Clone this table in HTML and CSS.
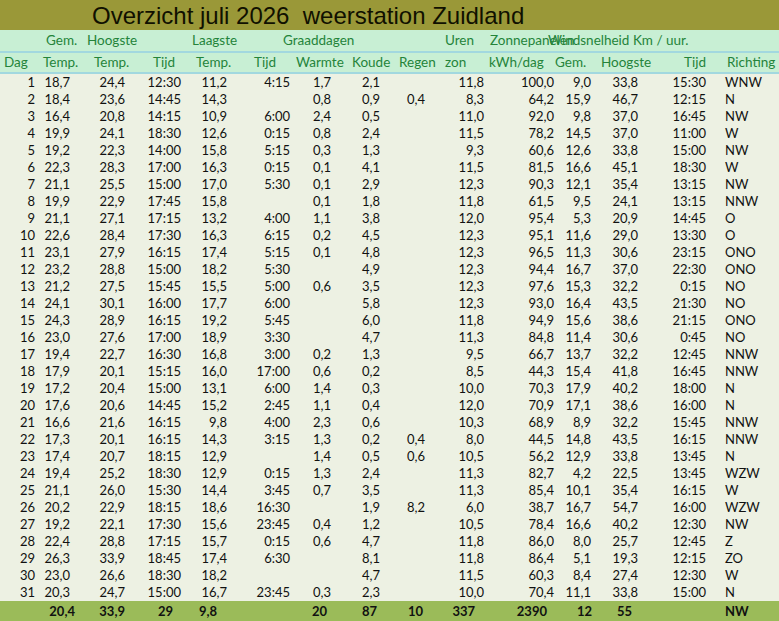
FILE: index.html
```html
<!DOCTYPE html>
<html lang="nl">
<head>
<meta charset="utf-8">
<title>Overzicht juli 2026 weerstation Zuidland</title>
<link rel="stylesheet" href="styles.css">
</head>
<body>
<div class="sheet">
  <div class="title">Overzicht juli 2026&nbsp; weerstation Zuidland</div>
  <div class="head1">
    <span>Gem.</span><span>Hoogste</span><span>Laagste</span><span>Graaddagen</span><span>Uren</span><span>Zonnepanelen</span><span>Windsnelheid Km / uur.</span>
  </div>
  <div class="head2">
    <span>Dag</span><span>Temp.</span><span>Temp.</span><span>Tijd</span><span>Temp.</span><span>Tijd</span><span>Warmte</span><span>Koude</span><span>Regen</span><span>zon</span><span>kWh/dag</span><span>Gem.</span><span>Hoogste</span><span class="r">Tijd</span><span class="rich">Richting</span>
  </div>
  <div class="data">
    <div class="row"><span>1</span><span>18,7</span><span>24,4</span><span>12:30</span><span>11,2</span><span>4:15</span><span>1,7</span><span>2,1</span><span></span><span>11,8</span><span>100,0</span><span>9,0</span><span>33,8</span><span>15:30</span><span>WNW</span></div>
    <div class="row"><span>2</span><span>18,4</span><span>23,6</span><span>14:45</span><span>14,3</span><span></span><span>0,8</span><span>0,9</span><span>0,4</span><span>8,3</span><span>64,2</span><span>15,9</span><span>46,7</span><span>12:15</span><span>N</span></div>
    <div class="row"><span>3</span><span>16,4</span><span>20,8</span><span>14:15</span><span>10,9</span><span>6:00</span><span>2,4</span><span>0,5</span><span></span><span>11,0</span><span>92,0</span><span>9,8</span><span>37,0</span><span>16:45</span><span>NW</span></div>
    <div class="row"><span>4</span><span>19,9</span><span>24,1</span><span>18:30</span><span>12,6</span><span>0:15</span><span>0,8</span><span>2,4</span><span></span><span>11,5</span><span>78,2</span><span>14,5</span><span>37,0</span><span>11:00</span><span>W</span></div>
    <div class="row"><span>5</span><span>19,2</span><span>22,3</span><span>14:00</span><span>15,8</span><span>5:15</span><span>0,3</span><span>1,3</span><span></span><span>9,3</span><span>60,6</span><span>12,6</span><span>33,8</span><span>15:00</span><span>NW</span></div>
    <div class="row"><span>6</span><span>22,3</span><span>28,3</span><span>17:00</span><span>16,3</span><span>0:15</span><span>0,1</span><span>4,1</span><span></span><span>11,5</span><span>81,5</span><span>16,6</span><span>45,1</span><span>18:30</span><span>W</span></div>
    <div class="row"><span>7</span><span>21,1</span><span>25,5</span><span>15:00</span><span>17,0</span><span>5:30</span><span>0,1</span><span>2,9</span><span></span><span>12,3</span><span>90,3</span><span>12,1</span><span>35,4</span><span>13:15</span><span>NW</span></div>
    <div class="row"><span>8</span><span>19,9</span><span>22,9</span><span>17:45</span><span>15,8</span><span></span><span>0,1</span><span>1,8</span><span></span><span>11,8</span><span>61,5</span><span>9,5</span><span>24,1</span><span>13:15</span><span>NNW</span></div>
    <div class="row"><span>9</span><span>21,1</span><span>27,1</span><span>17:15</span><span>13,2</span><span>4:00</span><span>1,1</span><span>3,8</span><span></span><span>12,0</span><span>95,4</span><span>5,3</span><span>20,9</span><span>14:45</span><span>O</span></div>
    <div class="row"><span>10</span><span>22,6</span><span>28,4</span><span>17:30</span><span>16,3</span><span>6:15</span><span>0,2</span><span>4,5</span><span></span><span>12,3</span><span>95,1</span><span>11,6</span><span>29,0</span><span>13:30</span><span>O</span></div>
    <div class="row"><span>11</span><span>23,1</span><span>27,9</span><span>16:15</span><span>17,4</span><span>5:15</span><span>0,1</span><span>4,8</span><span></span><span>12,3</span><span>96,5</span><span>11,3</span><span>30,6</span><span>23:15</span><span>ONO</span></div>
    <div class="row"><span>12</span><span>23,2</span><span>28,8</span><span>15:00</span><span>18,2</span><span>5:30</span><span></span><span>4,9</span><span></span><span>12,3</span><span>94,4</span><span>16,7</span><span>37,0</span><span>22:30</span><span>ONO</span></div>
    <div class="row"><span>13</span><span>21,2</span><span>27,5</span><span>15:45</span><span>15,5</span><span>5:00</span><span>0,6</span><span>3,5</span><span></span><span>12,3</span><span>97,6</span><span>15,3</span><span>32,2</span><span>0:15</span><span>NO</span></div>
    <div class="row"><span>14</span><span>24,1</span><span>30,1</span><span>16:00</span><span>17,7</span><span>6:00</span><span></span><span>5,8</span><span></span><span>12,3</span><span>93,0</span><span>16,4</span><span>43,5</span><span>21:30</span><span>NO</span></div>
    <div class="row"><span>15</span><span>24,3</span><span>28,9</span><span>16:15</span><span>19,2</span><span>5:45</span><span></span><span>6,0</span><span></span><span>11,8</span><span>94,9</span><span>15,6</span><span>38,6</span><span>21:15</span><span>ONO</span></div>
    <div class="row"><span>16</span><span>23,0</span><span>27,6</span><span>17:00</span><span>18,9</span><span>3:30</span><span></span><span>4,7</span><span></span><span>11,3</span><span>84,8</span><span>11,4</span><span>30,6</span><span>0:45</span><span>NO</span></div>
    <div class="row"><span>17</span><span>19,4</span><span>22,7</span><span>16:30</span><span>16,8</span><span>3:00</span><span>0,2</span><span>1,3</span><span></span><span>9,5</span><span>66,7</span><span>13,7</span><span>32,2</span><span>12:45</span><span>NNW</span></div>
    <div class="row"><span>18</span><span>17,9</span><span>20,1</span><span>15:15</span><span>16,0</span><span>17:00</span><span>0,6</span><span>0,2</span><span></span><span>8,5</span><span>44,3</span><span>15,4</span><span>41,8</span><span>16:45</span><span>NNW</span></div>
    <div class="row"><span>19</span><span>17,2</span><span>20,4</span><span>15:00</span><span>13,1</span><span>6:00</span><span>1,4</span><span>0,3</span><span></span><span>10,0</span><span>70,3</span><span>17,9</span><span>40,2</span><span>18:00</span><span>N</span></div>
    <div class="row"><span>20</span><span>17,6</span><span>20,6</span><span>14:45</span><span>15,2</span><span>2:45</span><span>1,1</span><span>0,4</span><span></span><span>12,0</span><span>70,9</span><span>17,1</span><span>38,6</span><span>16:00</span><span>N</span></div>
    <div class="row"><span>21</span><span>16,6</span><span>21,6</span><span>16:15</span><span>9,8</span><span>4:00</span><span>2,3</span><span>0,6</span><span></span><span>10,3</span><span>68,9</span><span>8,9</span><span>32,2</span><span>15:45</span><span>NNW</span></div>
    <div class="row"><span>22</span><span>17,3</span><span>20,1</span><span>16:15</span><span>14,3</span><span>3:15</span><span>1,3</span><span>0,2</span><span>0,4</span><span>8,0</span><span>44,5</span><span>14,8</span><span>43,5</span><span>16:15</span><span>NNW</span></div>
    <div class="row"><span>23</span><span>17,4</span><span>20,7</span><span>18:15</span><span>12,9</span><span></span><span>1,4</span><span>0,5</span><span>0,6</span><span>10,5</span><span>56,2</span><span>12,9</span><span>33,8</span><span>13:45</span><span>N</span></div>
    <div class="row"><span>24</span><span>19,4</span><span>25,2</span><span>18:30</span><span>12,9</span><span>0:15</span><span>1,3</span><span>2,4</span><span></span><span>11,3</span><span>82,7</span><span>4,2</span><span>22,5</span><span>13:45</span><span>WZW</span></div>
    <div class="row"><span>25</span><span>21,1</span><span>26,0</span><span>15:30</span><span>14,4</span><span>3:45</span><span>0,7</span><span>3,5</span><span></span><span>11,3</span><span>85,4</span><span>10,1</span><span>35,4</span><span>16:15</span><span>W</span></div>
    <div class="row"><span>26</span><span>20,2</span><span>22,9</span><span>18:15</span><span>18,6</span><span>16:30</span><span></span><span>1,9</span><span>8,2</span><span>6,0</span><span>38,7</span><span>16,7</span><span>54,7</span><span>16:00</span><span>WZW</span></div>
    <div class="row"><span>27</span><span>19,2</span><span>22,1</span><span>17:30</span><span>15,6</span><span>23:45</span><span>0,4</span><span>1,2</span><span></span><span>10,5</span><span>78,4</span><span>16,6</span><span>40,2</span><span>12:30</span><span>NW</span></div>
    <div class="row"><span>28</span><span>22,4</span><span>28,8</span><span>17:15</span><span>15,7</span><span>0:15</span><span>0,6</span><span>4,7</span><span></span><span>11,8</span><span>86,0</span><span>8,0</span><span>25,7</span><span>12:45</span><span>Z</span></div>
    <div class="row"><span>29</span><span>26,3</span><span>33,9</span><span>18:45</span><span>17,4</span><span>6:30</span><span></span><span>8,1</span><span></span><span>11,8</span><span>86,4</span><span>5,1</span><span>19,3</span><span>12:15</span><span>ZO</span></div>
    <div class="row"><span>30</span><span>23,0</span><span>26,6</span><span>18:30</span><span>18,2</span><span></span><span></span><span>4,7</span><span></span><span>11,5</span><span>60,3</span><span>8,4</span><span>27,4</span><span>12:30</span><span>W</span></div>
    <div class="row"><span>31</span><span>20,3</span><span>24,7</span><span>15:00</span><span>16,7</span><span>23:45</span><span>0,3</span><span>2,3</span><span></span><span>10,0</span><span>70,4</span><span>11,1</span><span>33,8</span><span>15:00</span><span>N</span></div>
  </div>
  <div class="foot">
    <span></span><span>20,4</span><span>33,9</span><span>29</span><span>9,8</span><span></span><span>20</span><span>87</span><span>10</span><span>337</span><span>2390</span><span>12</span><span>55</span><span></span><span>NW</span>
  </div>
</div>
</body>
</html>
```

FILE: styles.css
```css
html, body {
  margin: 0;
  padding: 0;
  background: #edf1e3;
}
.sheet {
  width: 779px;
  height: 621px;
  overflow: hidden;
  background: #edf1e3;
  font-family: Lato, "Open Sans", sans-serif;
  font-size: 13px;
  color: #111111;
}
.title {
  height: 30px;
  background: #9a9838;
  font-family: "Liberation Sans", Arial, sans-serif;
  font-size: 24px;
  line-height: 31px;
  padding-left: 92px;
  color: #101000;
  white-space: pre;
}
.head1, .head2 {
  display: grid;
  background: #c8efd4;
  color: #24843a;
  white-space: nowrap;
  border-bottom: 2px solid #a2d8df;
  font-size: 13.5px;
}
.head1 {
  height: 21px;
  line-height: 21px;
  padding-left: 46px;
  grid-template-columns: 41px 105px 91px 162px 45px 58px 1fr;
}
.head2 {
  height: 19px;
  line-height: 19px;
  padding-left: 4px;
  grid-template-columns: 39px 51px 59px 43px 58px 42px 56px 47px 46px 44px 66px 46px 65px 40px 1fr;
}
.head2 .r {
  text-align: right;
}
.head2 .rich {
  padding-left: 21px;
}
.row, .foot {
  display: grid;
  height: 17px;
  line-height: 17px;
  white-space: nowrap;
}
.row {
  grid-template-columns: 38px 35px 55px 56px 46px 63px 41px 49px 45px 59px 70px 37px 47px 68px 1fr;
}
.row span {
  text-align: right;
  padding-right: 3px;
}
.row span:last-child {
  text-align: left;
  padding-left: 16px;
  padding-right: 0;
}
.foot {
  height: 21px;
  line-height: 21px;
  background: #9bbb59;
  font-weight: bold;
  grid-template-columns: 38px 37px 50px 48px 44px 76px 34px 50px 46px 52px 72px 45px 40px 93px 1fr;
}
.foot span {
  text-align: right;
}
.foot span:last-child {
  text-align: left;
}
```
